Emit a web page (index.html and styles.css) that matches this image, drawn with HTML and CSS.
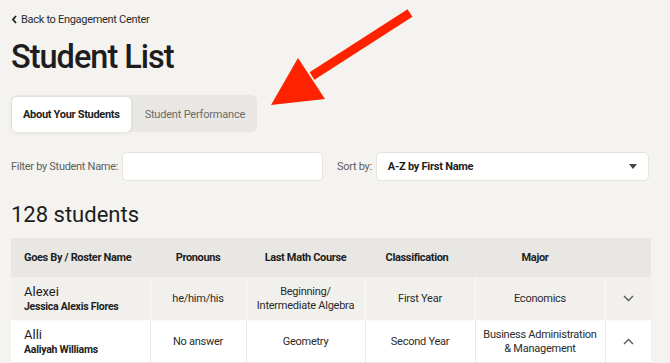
FILE: index.html
```html
<!DOCTYPE html>
<html lang="en">
  <head>
    <meta charset="UTF-8" />
    <title>Student List</title>
    <link rel="stylesheet" href="styles.css">
  </head>
  <body>
    <div class="page">
      <a class="back-link" href="#">
        <svg width="7" height="9" viewBox="0 0 7 9"><path d="M5 1 L2 4.5 L5 8" fill="none" stroke="#222" stroke-width="1.8"/></svg>
        Back to Engagement Center
      </a>
      <h1 class="title">Student List</h1>

      <!-- View tabs -->
      <div class="tabs">
        <button class="tab active">About Your Students</button>
        <button class="tab">Student Performance</button>
      </div>

      <div class="filters">
        <label class="filter-label">Filter by Student Name:</label>
        <input class="name-input" type="text" />
        <label class="filter-label sort-label">Sort by:</label>
        <div class="select">
          <span>A-Z by First Name</span>
          <svg width="8" height="5" viewBox="0 0 8 5"><path d="M0 0 H8 L4 5 Z" fill="#444"/></svg>
        </div>
      </div>

      <h2 class="count">128 students</h2>

      <table class="students">
        <colgroup>
          <col class="c-name" />
          <col class="c-pron" />
          <col class="c-math" />
          <col class="c-class" />
          <col class="c-major" />
          <col class="c-toggle" />
        </colgroup>
        <thead>
          <tr>
            <th class="name-col">Goes By / Roster Name</th>
            <th>Pronouns</th>
            <th>Last Math Course</th>
            <th class="class-head">Classification</th>
            <th class="major-head">Major</th>
            <th></th>
          </tr>
        </thead>
        <tbody>
          <tr class="row-alt">
            <td class="name-col"><div class="goes-by">Alexei</div><div class="roster">Jessica Alexis Flores</div></td>
            <td>he/him/his</td>
            <td>Beginning/<br>Intermediate Algebra</td>
            <td>First Year</td>
            <td>Economics</td>
            <td class="toggle-col"><svg width="11" height="7" viewBox="0 0 11 7"><path d="M1 1 L5.5 5.5 L10 1" fill="none" stroke="#555" stroke-width="1.3"/></svg></td>
          </tr>
          <tr>
            <td class="name-col"><div class="goes-by">Alli</div><div class="roster">Aaliyah Williams</div></td>
            <td>No answer</td>
            <td>Geometry</td>
            <td>Second Year</td>
            <td>Business Administration<br>&amp; Management</td>
            <td class="toggle-col"><svg width="11" height="7" viewBox="0 0 11 7"><path d="M1 6 L5.5 1.5 L10 6" fill="none" stroke="#555" stroke-width="1.3"/></svg></td>
          </tr>
        </tbody>
      </table>
    </div>

    <!-- annotation arrow -->
    <svg class="arrow" width="170" height="110" viewBox="0 0 170 110">
      <path d="M160 13 L62 76" stroke="#ff2200" stroke-width="9" fill="none"/>
      <path d="M21 105 L48 58 L75 99 Z" fill="#ff2200"/>
    </svg>
  </body>
</html>
```
FILE: styles.css
```css
body {
  margin: 0;
  background: #f4f3f0;
  font-family: "Roboto", "Liberation Sans", sans-serif;
  color: #1d1d1d;
  letter-spacing: -0.25px;
}

.page {
  width: 640px;
  padding: 11px 0 0 11px;
}

.back-link {
  display: flex;
  align-items: center;
  gap: 3px;
  font-size: 11px;
  letter-spacing: -0.3px;
  color: #2b2b2b;
  text-decoration: none;
  height: 16px;
}

.title {
  margin: 10px 0 0 0;
  font-size: 32.5px;
  font-weight: 500;
  letter-spacing: -1px;
  line-height: 40px;
}

.tabs {
  display: inline-flex;
  margin-top: 18px;
  background: #e9e7e3;
  border-radius: 6px;
  padding: 2px 0 0 1px;
  height: 35px;
}

.tab {
  border: none;
  background: none;
  font-family: inherit;
  font-size: 11px;
  letter-spacing: -0.2px;
  color: #6c6b69;
  padding: 0 12px 0 14px;
  border-radius: 5px;
}

.tab.active {
  background: #fff;
  color: #1d1d1d;
  font-weight: 700;
  padding: 0 11px;
  letter-spacing: -0.3px;
  box-shadow: 0 1px 4px rgba(0, 0, 0, 0.08);
}

.filters {
  display: flex;
  align-items: center;
  margin-top: 19px;
  height: 30px;
}

.filter-label {
  flex-shrink: 0;
  white-space: nowrap;
  font-size: 11px;
  letter-spacing: -0.3px;
  color: #5f5e5c;
  margin-right: 4px;
}

.sort-label {
  margin-left: 14px;
}

.name-input {
  flex-shrink: 0;
  width: 201px;
  height: 29px;
  box-sizing: border-box;
  border: 1px solid #e6e3de;
  border-radius: 5px;
  background: #fff;
}

.select {
  flex: 1;
  display: flex;
  align-items: center;
  justify-content: space-between;
  height: 29px;
  box-sizing: border-box;
  padding: 0 11px;
  background: #fff;
  border: 1px solid #e6e3de;
  border-radius: 5px;
  font-size: 11px;
  font-weight: 700;
  margin-right: 2px;
}

.count {
  margin: 19px 0 0 0;
  font-size: 22px;
  font-weight: 400;
  letter-spacing: 0;
  line-height: 30px;
}

.students {
  margin-top: 8px;
  width: 640px;
  border-collapse: collapse;
  font-size: 11px;
  table-layout: fixed;
}

.c-name { width: 139px; }
.c-pron { width: 96px; }
.c-math { width: 119px; }
.c-class { width: 110px; }
.c-major { width: 130px; }
.c-toggle { width: 46px; }

.students th {
  background: #e9e7e3;
  font-weight: 700;
  letter-spacing: -0.35px;
  height: 39px;
  padding: 0;
  text-align: center;
}

.students th.class-head {
  padding-right: 6px;
}

.students th.major-head {
  padding-right: 10px;
}

.students td {
  background: #fff;
  border: 1px solid #ebe8e4;
  text-align: center;
  color: #2b2b2b;
  line-height: 14px;
  height: 41px;
  padding: 0;
}

.students tr.row-alt td {
  background: #f2f0ec;
  border-color: #fbfaf8;
  height: 43px;
}

.students tr:first-child td {
  border-top: none;
}

.students td:first-child {
  border-left: none;
}

.students td:last-child {
  border-right: none;
}

.students .name-col {
  text-align: left;
  padding-left: 13px;
}

.goes-by {
  font-size: 13px;
  line-height: 16px;
  letter-spacing: 0;
  color: #1d1d1d;
}

.roster {
  font-size: 10.5px;
  font-weight: 700;
  line-height: 14px;
  color: #1d1d1d;
}

.toggle-col svg {
  display: block;
  margin: 0 auto;
}

.arrow {
  position: absolute;
  left: 250px;
  top: 0;
}
```
